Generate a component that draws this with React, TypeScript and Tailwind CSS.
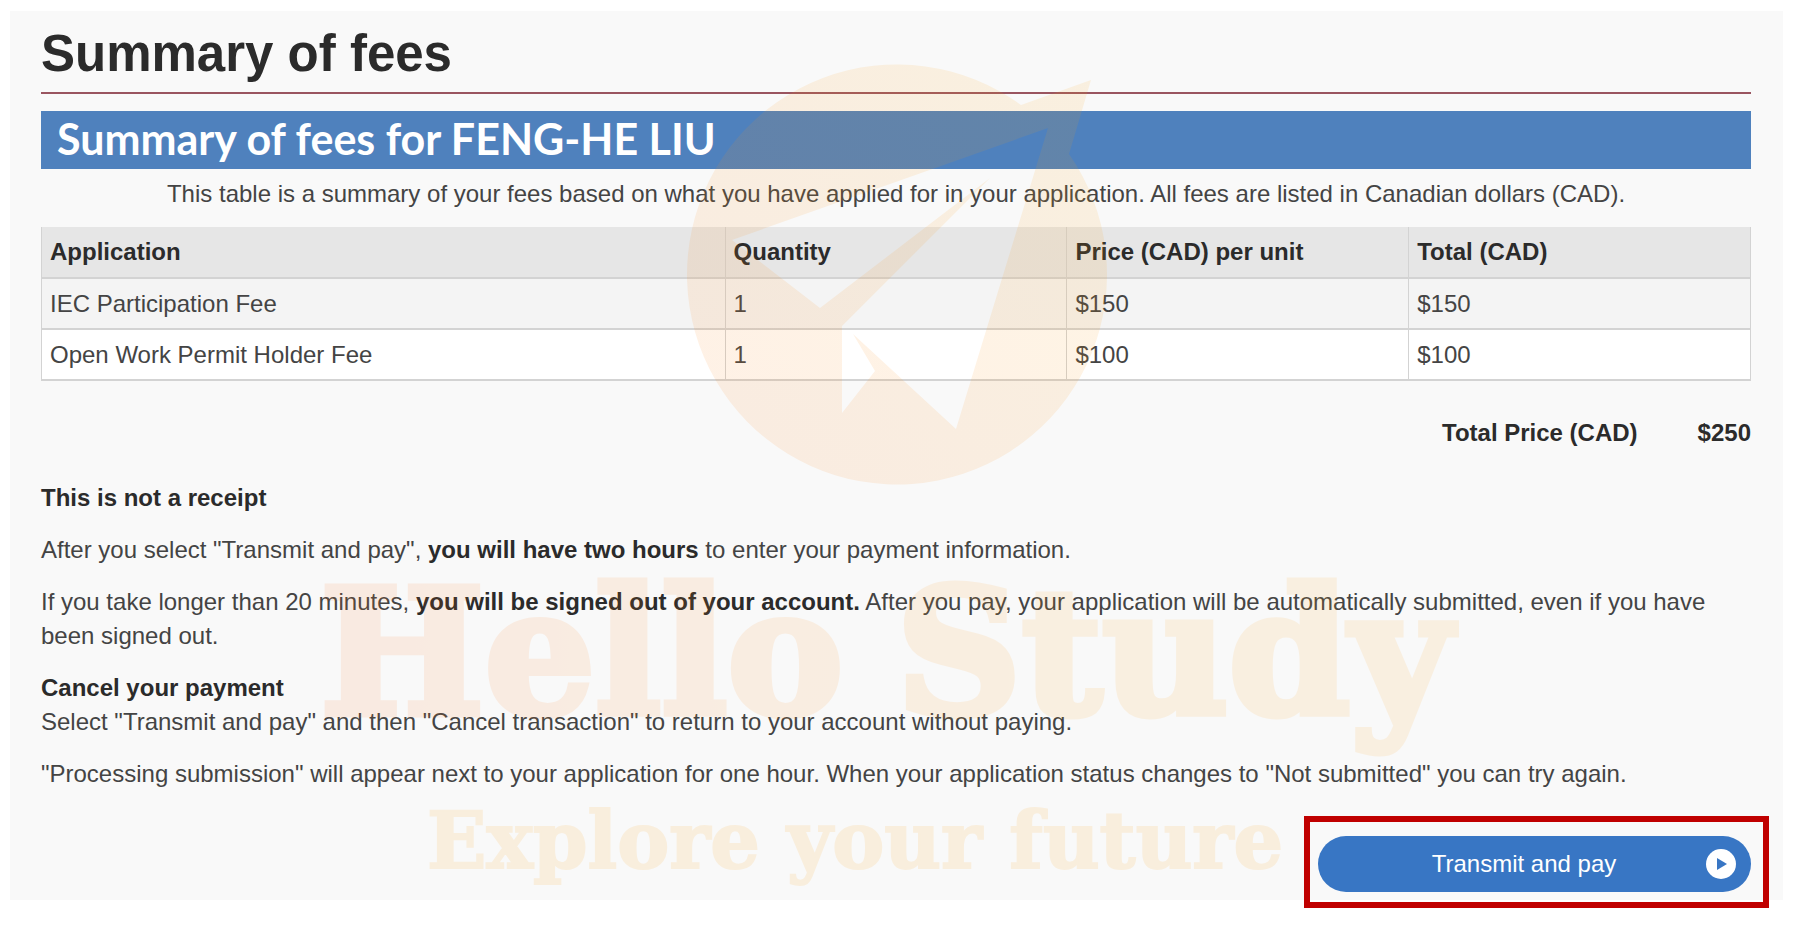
import React from 'react';

interface Fee {
  name: string;
  quantity: number;
  price: number;
}

const OWNER = 'FENG-HE LIU';

const FEES: Fee[] = [
  { name: 'IEC Participation Fee', quantity: 1, price: 150 },
  { name: 'Open Work Permit Holder Fee', quantity: 1, price: 100 },
];

const COLUMNS = [
  { label: 'Application', width: 'w-[40%]' },
  { label: 'Quantity', width: 'w-[20%]' },
  { label: 'Price (CAD) per unit', width: 'w-[20%]' },
  { label: 'Total (CAD)', width: 'w-[20%]' },
];

const Watermark: React.FC = () => (
  <svg
    className="absolute inset-x-0 top-0 mx-auto pointer-events-none"
    width="1795"
    height="942"
    viewBox="0 0 1795 942"
    aria-hidden="true"
  >
    <defs>
      <linearGradient id="brand" gradientUnits="userSpaceOnUse" x1="322" y1="0" x2="1100" y2="0">
        <stop offset="0" stopColor="#fa6e19" />
        <stop offset="1" stopColor="#faa014" />
      </linearGradient>
      <linearGradient id="disc" gradientUnits="userSpaceOnUse" x1="750" y1="420" x2="1040" y2="130">
        <stop offset="0" stopColor="#fa8219" />
        <stop offset="1" stopColor="#faa00f" />
      </linearGradient>
    </defs>
    {/* Paper plane cut out of the disc */}
    <path
      fill="url(#disc)"
      fillOpacity="0.11"
      fillRule="evenodd"
      d="M1021 105 L1091 80 L1069 154 A210 210 0 1 1 1021 105 Z M1048 128 L732 240 L820 308 L990 178 L842 326 V413 L875 371 L853 334 L956 429 Z"
    />
    <g className="font-['DejaVu_Serif'] font-bold">
      <g fill="url(#brand)" stroke="url(#brand)" strokeWidth="7" opacity="0.1" fontSize="174">
        <text x="320" y="714">Hello</text>
        <text x="896" y="714">Study</text>
      </g>
      <text x="427" y="868" fontSize="78" fill="#faa519" stroke="#faa519" strokeWidth="2" opacity="0.12">Explore your future</text>
    </g>
  </svg>
);

const FeeTable: React.FC = () => (
  <table className="w-full table-fixed border-collapse text-left">
    <caption className="h-[58px] pt-2 text-center">
      This table is a summary of your fees based on what you have applied for in your application. All fees are listed in Canadian dollars (CAD).
    </caption>
    <thead className="bg-[#e6e6e6]">
      <tr>
        {COLUMNS.map((column) => (
          <th key={column.label} className={`${column.width} h-[51px] px-2 font-bold text-[#2b2b2b] border-x border-b-2 border-[#d3d3d3]`}>
            {column.label}
          </th>
        ))}
      </tr>
    </thead>
    <tbody>
      {FEES.map((fee) => (
        <tr key={fee.name} className="odd:bg-[#f4f4f4] even:bg-white">
          <td className="h-[51px] px-2 border-x border-b-2 border-[#d3d3d3]">{fee.name}</td>
          <td className="h-[51px] px-2 border-x border-b-2 border-[#d3d3d3]">{fee.quantity}</td>
          <td className="h-[51px] px-2 border-x border-b-2 border-[#d3d3d3]">${fee.price}</td>
          <td className="h-[51px] px-2 border-x border-b-2 border-[#d3d3d3]">${fee.price * fee.quantity}</td>
        </tr>
      ))}
    </tbody>
  </table>
);

const PayButton: React.FC = () => (
  <div className="relative w-[433px]">
    <button type="button" className="flex w-full h-14 items-center rounded-full bg-[#3876c4] pl-6 pr-[15px] text-white">
      <span className="flex-1 text-center">Transmit and pay</span>
      <svg width="30" height="30" viewBox="0 0 30 30" aria-hidden="true">
        <circle cx="15" cy="15" r="15" fill="#fff" />
        <path d="M11 9 L21 15 L11 21 Z" fill="#3876c4" />
      </svg>
    </button>
    <div className="absolute -top-5 -bottom-4 -left-3.5 -right-[18px] border-6 border-[#c00000] pointer-events-none"></div>
  </div>
);

export default function App() {
  const total = FEES.reduce((sum, fee) => sum + fee.price * fee.quantity, 0);

  return (
    <div className="relative min-h-screen overflow-hidden bg-white pl-2.5 pr-3 pt-[11px] font-['Liberation_Sans',Arial,sans-serif] text-[24px] leading-[34px] text-[#444]">
      <main className="bg-[#f9f9f9] pl-[31px] pr-8 pt-[13px] pb-2">
        <h1 className="pb-2 text-[51px] leading-[60px] font-bold text-[#2b2b2b] border-b-2 border-[#9a5560]">Summary of fees</h1>

        <h2 className="mt-[17px] h-[58px] bg-[#4f81bd] px-4 font-[Lato,Carlito,sans-serif] text-[43px] leading-[56px] font-bold text-white">
          Summary of fees for {OWNER}
        </h2>

        <FeeTable />

        <div className="mt-[35px] flex justify-end gap-[60px] font-bold text-[#2b2b2b]">
          <span>Total Price (CAD)</span>
          <span>${total}</span>
        </div>

        <div className="mt-[31px] space-y-[18px]">
          <h3 className="font-bold text-[#2b2b2b]">This is not a receipt</h3>
          <p>
            After you select "Transmit and pay", <strong className="text-[#2b2b2b]">you will have two hours</strong> to enter your payment information.
          </p>
          <p>
            If you take longer than 20 minutes, <strong className="text-[#2b2b2b]">you will be signed out of your account.</strong> After you pay, your application will be automatically submitted, even if you have been signed out.
          </p>
          <div>
            <h3 className="font-bold text-[#2b2b2b]">Cancel your payment</h3>
            <p>Select "Transmit and pay" and then "Cancel transaction" to return to your account without paying.</p>
          </div>
          <p>
            "Processing submission" will appear next to your application for one hour. When your application status changes to "Not submitted" you can try again.
          </p>
        </div>

        <div className="mt-[45px] flex justify-end">
          <PayButton />
        </div>
      </main>

      <Watermark />
    </div>
  );
}
